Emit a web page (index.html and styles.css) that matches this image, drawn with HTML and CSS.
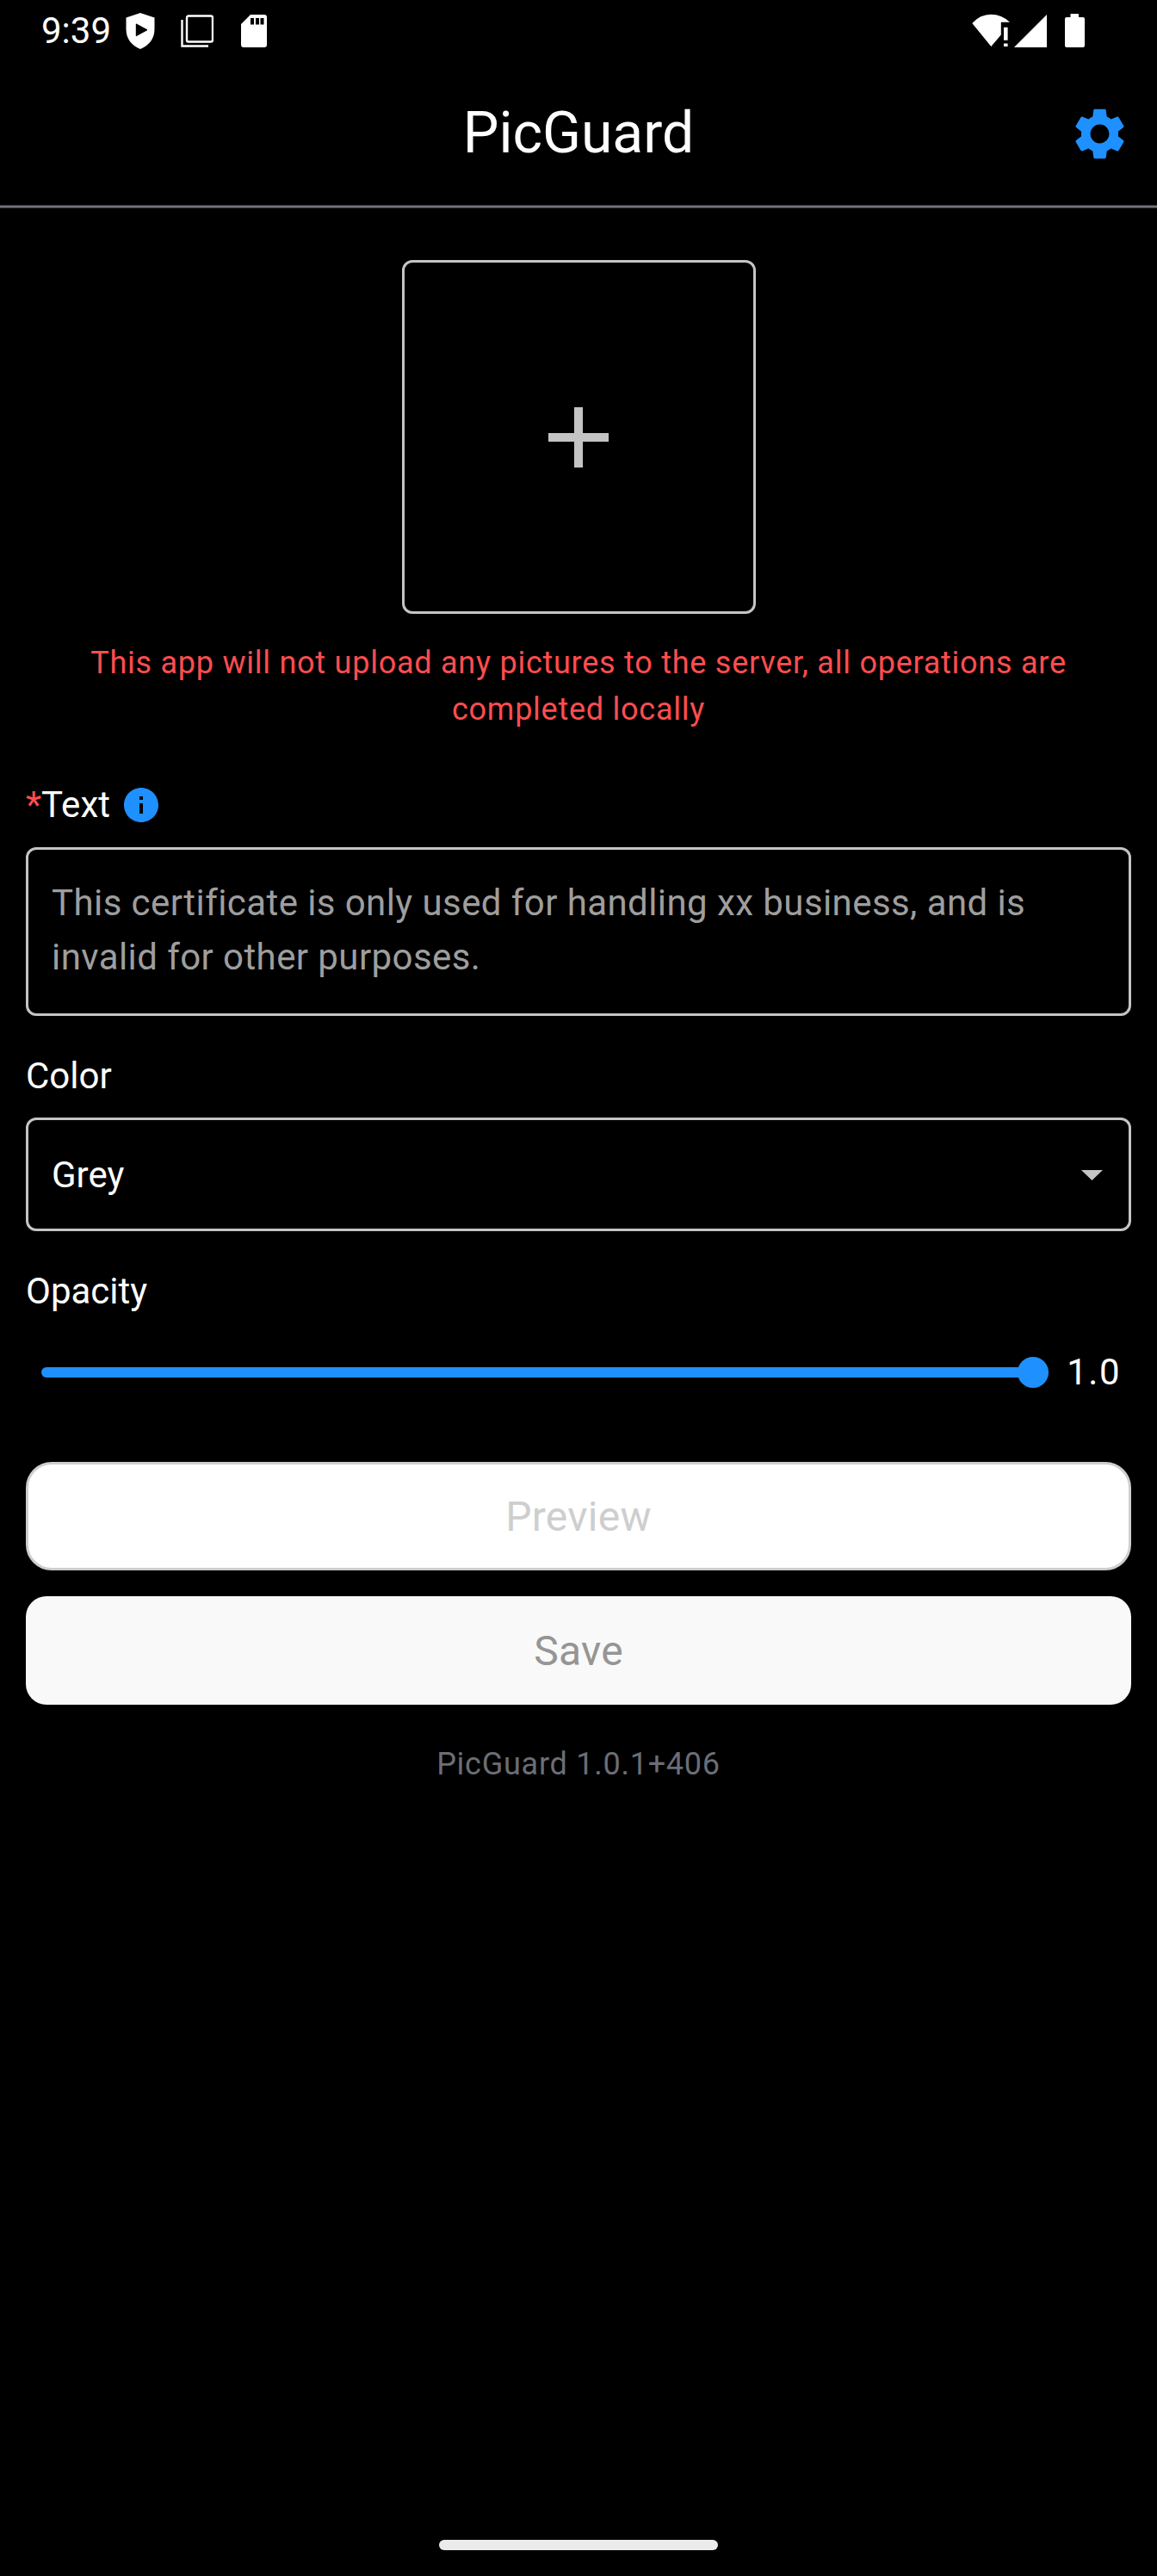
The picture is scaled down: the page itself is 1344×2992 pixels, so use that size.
FILE: index.html
```html
<!DOCTYPE html>
<html lang="en">
<head>
<meta charset="utf-8">
<title>PicGuard</title>
<link rel="stylesheet" href="styles.css">
</head>
<body>
<div class="screen">
  <header class="status">
    <div class="status-left">
      <span class="clock">9:39</span>
      <svg class="shield" viewBox="0 0 34 42" fill="#fff"><path fill-rule="evenodd" d="M17 0 33.500 5.500V19C33.500 30 27 38 17 42 7 38 .5 30 .5 19V5.500ZM12.500 12.500Q11.800 12.300 11.800 13.200V26.500Q11.800 27.300 12.500 27.100L25 20.300V19.300Z"/></svg>
      <svg class="stack" viewBox="0 0 38 38" fill="none" stroke="#fff" stroke-width="2.400"><rect x="7" y="1.500" width="30" height="30" rx="2"/><path d="M1.500 6V36.500H32"/></svg>
      <svg class="sd" viewBox="0 0 30 38" fill="#fff"><path fill-rule="evenodd" d="M11 0H27Q30 0 30 3V35Q30 38 27 38H3Q0 38 0 35V11ZM11 4V11.500H15V4ZM17 4V11.500H21V4ZM22.500 4V11.500H26.500V4Z"/></svg>
    </div>
    <div class="status-right">
      <svg class="wifi" viewBox="0 0 45 38" fill="#fff"><path d="M1.300 11Q10.500 .8 23 .8T45 9.800H34.800V24.500L23.300 38ZM38 15.800H42.600V30.700H38ZM38 34.500H42.600V38H38Z"/></svg>
      <svg class="signal" viewBox="0 0 38 38" fill="#fff"><path d="M38 0V38H0Z"/></svg>
      <svg class="battery" viewBox="0 0 24 39" fill="#fff"><path d="M7.500 0H17V4H22Q24 4 24 6V37Q24 39 22 39H3Q1 39 1 37V6Q1 4 3 4H7.500Z"/></svg>
    </div>
  </header>
  <div class="appbar">
    <h1 class="title">PicGuard</h1>
    <svg class="gear" viewBox="0 0 24 24" fill="#1e90ff"><path d="M19.430 12.980c.04-.32.07-.64.07-.98s-.03-.66-.07-.98l2.110-1.650c.19-.15.24-.42.12-.64l-2-3.460c-.12-.22-.39-.3-.61-.22l-2.490 1c-.52-.4-1.080-.73-1.690-.98l-.38-2.650C14.460 2.180 14.250 2 14 2h-4c-.25 0-.46.18-.49.42l-.38 2.650c-.61.25-1.170.59-1.690.98l-2.490-1c-.23-.09-.49 0-.61.22l-2 3.460c-.13.22-.07.49.12.64l2.110 1.650c-.04.32-.07.65-.07.98s.03.66.07.98l-2.110 1.650c-.19.15-.24.42-.12.64l2 3.460c.12.22.39.3.61.22l2.490-1c.52.4 1.080.73 1.690.98l.38 2.650c.03.24.24.42.49.42h4c.25 0 .46-.18.49-.42l.38-2.650c.61-.25 1.170-.59 1.690-.98l2.490 1c.23.09.49 0 .61-.22l2-3.460c.12-.22.07-.49-.12-.64l-2.110-1.650zM12 15.800c-2.100 0-3.800-1.700-3.800-3.800s1.700-3.800 3.800-3.800 3.800 1.700 3.800 3.800-1.700 3.800-3.800 3.800z"/></svg>
  </div>
  <div class="divider"></div>
  <main class="content">
    <div class="picker"><svg class="plus" viewBox="0 0 70 70" fill="#c4c4c4"><path d="M30 0H40V30H70V40H40V70H30V40H0V30H30Z"/></svg></div>
    <p class="notice">This app will not upload any pictures to the server, all operations are completed locally</p>
    <div class="label label-text"><span><span class="required">*</span>Text</span><svg class="info" viewBox="2 2 20 20" fill="#1e90ff"><path d="M12 2C6.480 2 2 6.480 2 12s4.480 10 10 10 10-4.480 10-10S17.520 2 12 2zm1 15h-2v-6h2v6zm0-8h-2V7h2v2z"/></svg></div>
    <div class="field">This certificate is only used for handling xx business, and is invalid for other purposes.</div>
    <div class="label label-color">Color</div>
    <div class="select"><span>Grey</span><svg class="caret" viewBox="0 0 25 12" fill="#c4c4c4"><path d="M0 0H25L12.500 12Z"/></svg></div>
    <div class="label label-opacity">Opacity</div>
    <div class="slider"><div class="track"><div class="thumb"></div></div><span class="value">1.0</span></div>
    <div class="button preview">Preview</div>
    <div class="button save">Save</div>
    <p class="version">PicGuard 1.0.1+406</p>
  </main>
  <div class="home"></div>
</div>
</body>
</html>
```
FILE: styles.css
```css
* { box-sizing: border-box; }
body { margin: 0; background: #000; color: #fff; font-family: Roboto, sans-serif; font-size: 42px; }
svg { display: block; flex: none; }
.screen { width: 1344px; height: 2992px; display: flex; flex-direction: column; }

.status { height: 72px; display: flex; justify-content: space-between; padding: 0 84px 0 48px; }
.status-left, .status-right { display: flex; align-items: flex-start; }
.clock { font-size: 42px; line-height: 50px; margin-top: 11px; width: 98px; white-space: nowrap; }
.shield { width: 34px; height: 42px; margin-top: 15px; }
.stack { width: 38px; height: 38px; margin: 17px 0 0 30px; }
.sd { width: 30px; height: 38px; margin: 17px 0 0 32px; }
.wifi { width: 45px; height: 38px; margin-top: 16px; }
.signal { width: 38px; height: 38px; margin: 17px 0 0 5px; }
.battery { width: 24px; height: 39px; margin: 16px 0 0 20px; }

.appbar { height: 166px; display: grid; grid-template-columns: 1fr auto 1fr; align-items: center; }
.title { grid-column: 2; margin: 0; font-size: 66px; line-height: 84px; font-weight: 400; }
.gear { justify-self: end; width: 69px; height: 69px; margin-right: 32px; }
.divider { height: 4px; background: #70737a; border: solid #3a3b3e; border-width: 1px 0; }

.content { padding: 60px 30px 0; display: flex; flex-direction: column; flex: 1; }
.picker { width: 411px; height: 411px; border: 3px solid #c4c4c4; border-radius: 12px; align-self: center; display: grid; place-items: center; }
.plus { width: 70px; height: 70px; }
.notice { margin: 30px 60px 0; font-size: 36px; line-height: 54px; letter-spacing: .75px; text-align: center; color: #ff4d4f; }
.label { line-height: 63px; height: 63px; }
.required { color: #ff4d4f; }
.label-text { margin-top: 52px; display: flex; align-items: center; gap: 16px; }
.info { width: 40px; height: 40px; }
.field { margin-top: 18px; height: 196px; border: 3px solid #c4c4c4; border-radius: 12px; padding: 30px 27px; line-height: 63px; letter-spacing: .42px; color: #9e9e9e; }
.label-color { margin-top: 38px; }
.select { margin-top: 17px; height: 132px; border: 3px solid #c4c4c4; border-radius: 12px; padding: 0 30px 0 27px; display: flex; align-items: center; justify-content: space-between; }
.caret { width: 25px; height: 12px; margin-top: 2px; }
.label-opacity { margin-top: 38px; }
.slider { margin-top: 14px; height: 97px; display: flex; align-items: center; padding: 0 12px 0 18px; justify-content: space-between; }
.track { width: 1170px; height: 12px; border-radius: 6px; background: #1e90ff; display: flex; align-items: center; justify-content: flex-end; }
.thumb { width: 36px; height: 36px; border-radius: 50%; background: #1e90ff; }
.value { letter-spacing: 1.500px; }
.button { height: 126px; display: grid; place-items: center; font-size: 48px; flex: none; letter-spacing: .25px; }
.preview { margin-top: 56px; background: #fff; border: 3px solid #cecece; border-radius: 30px; color: #cecece; }
.save { margin-top: 30px; background: #f9f9f9; border-radius: 24px; color: #959595; }
.version { margin: 42px 0 0; font-size: 36px; line-height: 54px; letter-spacing: .75px; text-align: center; color: #6b6e76; }

.home { width: 324px; height: 12px; border-radius: 6px; background: #ebebeb; align-self: center; margin-bottom: 30px; }
```
